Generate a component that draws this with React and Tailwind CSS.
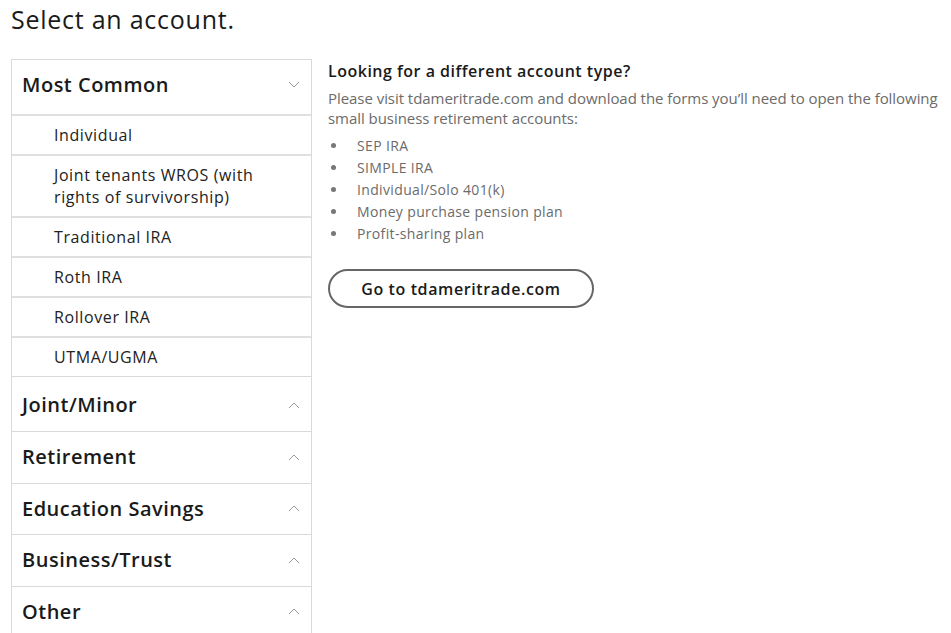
import React from "react";

const font = { fontFamily: '"Open Sans", "Noto Sans", Arial, sans-serif' };

const Chevron = ({ up }) => (
  <svg width="12" height="7" viewBox="0 0 12 7" fill="none" className="shrink-0">
    <path
      d={up ? "M1 6L6 1L11 6" : "M1 1L6 6L11 1"}
      stroke="#9a9a9a"
      strokeWidth="1"
    />
  </svg>
);

const common = [
  "Individual",
  "Joint tenants WROS (with rights of survivorship)",
  "Traditional IRA",
  "Roth IRA",
  "Rollover IRA",
  "UTMA/UGMA",
];

const groups = ["Joint/Minor", "Retirement", "Education Savings", "Business/Trust", "Other"];

const plans = [
  "SEP IRA",
  "SIMPLE IRA",
  "Individual/Solo 401(k)",
  "Money purchase pension plan",
  "Profit-sharing plan",
];

export default function App() {
  return (
    <div className="bg-white text-[#1a1a1a] w-[951px] h-[633px] overflow-hidden pl-[11px]" style={font}>
      <h1 className="text-[25px] font-medium leading-[30px] pt-[4px] tracking-[0.75px]">Select an account.</h1>

      <div className="flex mt-[25px] gap-[16px]">
        {/* accordion */}
        <div className="w-[301px] shrink-0 border border-[#d9d9d9]">
          <div className="flex items-center justify-between h-[54px] pb-[5px] pl-[10px] pr-[11px]">
            <span className="text-[20px] font-semibold tracking-[0.5px]">Most Common</span>
            <Chevron />
          </div>
          {common.map((c) => (
            <div
              key={c}
              className="border-t-2 border-[#e0e0e0] pl-[42px] pr-[40px] py-[8px] text-[16px] leading-[22px] tracking-[0.6px] text-[#222]"
            >
              {c}
            </div>
          ))}
          {groups.map((g, i) => (
            <div
              key={g}
              className={`flex items-center justify-between pl-[10px] pr-[11px] border-t border-[#d9d9d9] ${i === 0 ? "h-[55px] pt-[2px]" : "h-[51.5px]"}`}
            >
              <span className="text-[20px] font-semibold tracking-[0.5px]">{g}</span>
              <Chevron up />
            </div>
          ))}
        </div>

        {/* info */}
        <div className="flex-1 pt-[1px]">
          <h2 className="text-[16px] font-semibold leading-[22px] tracking-[0.5px]">Looking for a different account type?</h2>
          <p className="text-[15px] text-[#6b6b6b] leading-[20px] mt-[6px] tracking-[-0.05px]">
            Please visit tdameritrade.com and download the forms you’ll need to open the following small business retirement accounts:
          </p>
          <ul className="mt-[6px]">
            {plans.map((p) => (
              <li key={p} className="flex items-center h-[22px] text-[14px] tracking-[0.35px] text-[#6b6b6b]">
                <span className="w-[5px] h-[5px] rounded-full bg-[#777] ml-[3px] mr-[21px]" />
                {p}
              </li>
            ))}
          </ul>
          <button className="mt-[25px] w-[266px] h-[39px] rounded-full border-2 border-[#666] text-[16px] font-semibold tracking-[0.6px] text-[#1a1a1a]">
            Go to tdameritrade.com
          </button>
        </div>
      </div>
    </div>
  );
}
